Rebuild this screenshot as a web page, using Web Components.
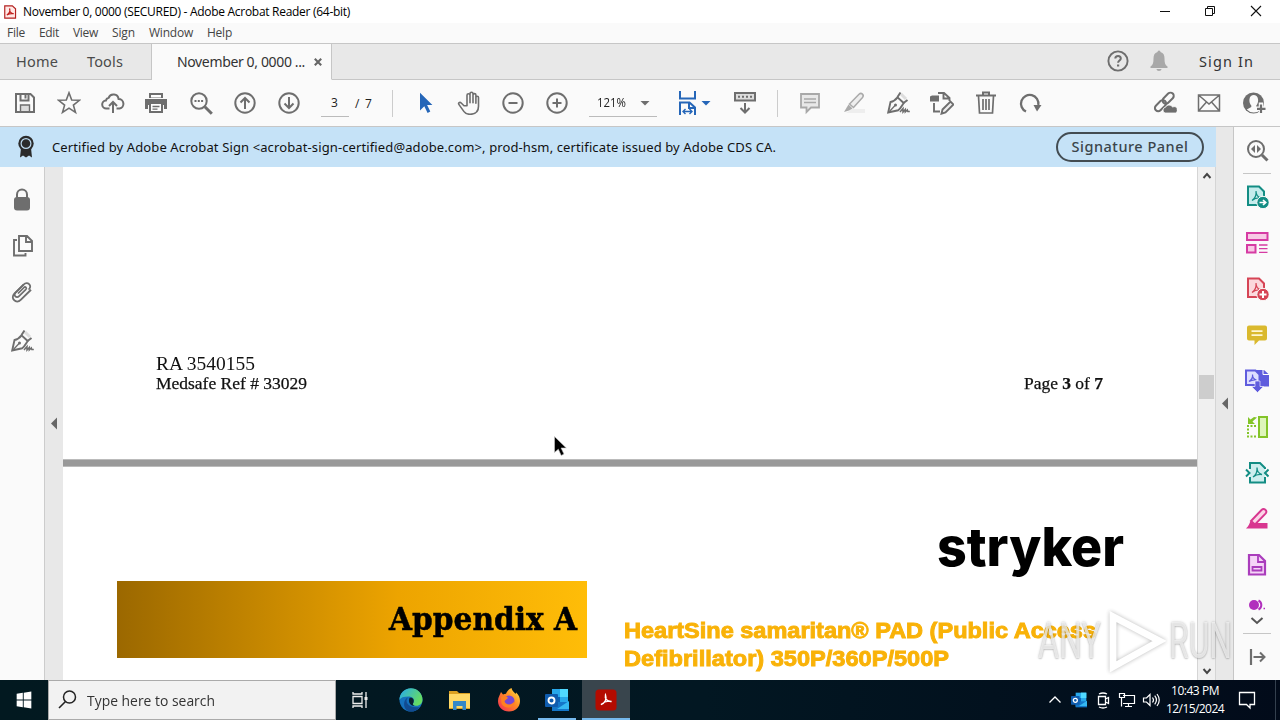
<!DOCTYPE html>
<html lang="en">
<head>
<meta charset="utf-8">
<title>November 0, 0000 (SECURED) - Adobe Acrobat Reader (64-bit)</title>
<style>
html,body{margin:0;padding:0;width:1280px;height:720px;overflow:hidden;background:#fff;font-family:"Open Sans","Noto Sans",sans-serif;color:#333}
</style>
</head>
<body>
<reader-window></reader-window>
<script>
const ICONS = {
save:'<g fill="none" stroke="#6e6e6e" stroke-width="2"><path d="M3 3h14.5L21 6.5V21H3z"/><path d="M7.5 3v6.5h8V3M12.5 4v3.5"/><path d="M7.5 20v-6h9v6" fill="#ddd" stroke-width="1.4"/></g>',
star:'<path d="M12 1.8l2.7 7.2 7.7.3-6 4.8 2.1 7.4L12 17.200l-6.500 4.300 2.100-7.400-6-4.800 7.700-.3z" fill="none" stroke="#6e6e6e" stroke-width="1.6"/>',
cloud:'<g fill="none" stroke="#6e6e6e" stroke-width="2"><path d="M8.500 17.500H5.500a4 4 0 0 1-.6-8 3.500 3.500 0 0 1 2.700-2.700 5.200 5.200 0 0 1 10 1.200 4.800 4.800 0 0 1 1 9.500H15.500"/><path d="M12 22v-10M8 15l4-4 4 4"/></g>',
print:'<path d="M4 2h14v5H4z" fill="#6e6e6e"/><path d="M0 8h22v10h-3v-4H3v4H0z" fill="#6e6e6e"/><path d="M5 13v8h12V13" fill="#fff" stroke="#6e6e6e" stroke-width="2"/><path d="M7.500 15.500h7M7.500 18.200h5" stroke="#6e6e6e" stroke-width="1.300"/><path d="M6 4h10v2.500H6z" fill="#fff"/>',
find:'<circle cx="10" cy="10" r="7.700" fill="none" stroke="#6e6e6e" stroke-width="2"/><path d="M15.800 15.800l7 7" stroke="#6e6e6e" stroke-width="3"/><path d="M5.500 10h9" stroke="#6e6e6e" stroke-width="2.200" stroke-dasharray="2 1.300"/>',
up:'<g fill="none" stroke="#6e6e6e" stroke-width="2"><circle cx="12" cy="12" r="9.700"/><path d="M12 18V7.500M7.500 11.500l4.500-4.500 4.500 4.500"/></g>',
down:'<g fill="none" stroke="#6e6e6e" stroke-width="2"><circle cx="12" cy="12" r="9.700"/><path d="M12 6v10.500M7.500 12.500l4.500 4.500 4.500-4.500"/></g>',
arrow:'<path d="M7 1.800v17.700l4.300-4.200 3.300 6.700 2.700-1.400-3.200-6.500h5.300z" fill="#2566b8"/>',
hand:'<path d="M6.500 14.500L3.700 11.700c-1.500-1.500-3.300.2-2.200 1.600l5 7c1.600 2.200 3.500 2.700 6 2.700 5.200 0 8.500-2.500 8.500-8V6.300c0-1.900-2.600-1.900-2.600 0V12 3.800c0-2-2.900-2-2.900 0V11.500 2.500c0-2-3-2-3 0v9 -7.500c0-2-3-2-3 0V14.500z" transform="translate(.5 .3)" fill="none" stroke="#6e6e6e" stroke-width="1.600" stroke-linejoin="round"/>',
minus:'<g fill="none" stroke="#6e6e6e" stroke-width="2"><circle cx="12" cy="12" r="9.700"/><path d="M7.500 12h9"/></g>',
plus:'<g fill="none" stroke="#6e6e6e" stroke-width="2"><circle cx="12" cy="12" r="9.700"/><path d="M7.500 12h9M12 7.500v9"/></g>',
fit:'<g fill="none" stroke="#2566b8" stroke-width="2"><path d="M4 0v7.500h15V0M4 24V11.500h9.500l5.500 5V24M13 11.500v5.500h6"/><path d="M7 20.500h9M9.500 18l-2.500 2.500 2.500 2.500M13.500 18l2.500 2.500-2.500 2.500" stroke-width="1.400"/></g>',
keys:'<path d="M2 2h20v7.500H2z" fill="#ddd" stroke="#6e6e6e" stroke-width="2"/><path d="M5 5.800h14" stroke="#6e6e6e" stroke-width="2" stroke-dasharray="2 2"/><path d="M12 12v9M7.500 17l4.500 4.500 4.500-4.500" fill="none" stroke="#6e6e6e" stroke-width="2"/>',
note:'<path d="M3 3h18v13.500h-8L8.500 21v-4.500H3z" fill="#e8e8e8" stroke="#a8a8a8" stroke-width="1.800"/><path d="M6 8h12M6 11.500h12" stroke="#a8a8a8" stroke-width="1.400"/>',
mark:'<path d="M10 18h13v4H4z" fill="#eee"/><path d="M7.500 13L17 3.200c2.500-2.200 5.500.8 3.500 3.300L11.500 16.500z" fill="#eee" stroke="#aaa" stroke-width="1.500"/><path d="M6.500 13.500l4 4-3.500 2-5 1.500z" fill="#aaa"/>',
pen:'<path d="M2.200 21.500l2.300-10.500c3-.6 5-2.100 7-4.700l6.200 5.700c-2 3-3 5.500-5.500 7.300z" fill="none" stroke="#6e6e6e" stroke-width="1.900"/><path d="M3 21l6-6.500" stroke="#6e6e6e" stroke-width="1.300"/><circle cx="9.500" cy="14" r="1.500" fill="#6e6e6e"/><path d="M15 3l5 5" stroke="#ddd" stroke-width="3"/><path d="M11.500 6l3-4.500M17.500 12l4-3" stroke="#6e6e6e" stroke-width="2"/><path d="M14 21l3-3.500v3.500l2.300-2.500v2.500l2-2 .5 1.500h2" fill="none" stroke="#6e6e6e" stroke-width="1.500"/>',
edit:'<g fill="none" stroke="#6e6e6e" stroke-width="1.900"><path d="M8 2h6l5.500 5v3M13.500 2v5.500h6M4 12v8.500h6"/><path d="M12.500 18.500l8-8 3 3-8 8-4 1.200z" fill="#eee"/></g><path d="M0 5.500l2-1h7v6H0z" fill="#6e6e6e"/>',
trash:'<g fill="none" stroke="#6e6e6e" stroke-width="2"><path d="M2 4.500h20M9 4V1.500h6V4"/><path d="M4.500 5l1 17h13l1-17M9 8v11M12 8v11M15 8v11" stroke-width="1.700"/></g>',
rotate:'<path d="M8 20.500A8.700 8.700 0 1 1 20.300 14" fill="none" stroke="#6e6e6e" stroke-width="2.300"/><path d="M15.500 14h8l-4.500 6.500z" fill="#6e6e6e"/>',
link:'<g fill="none" stroke="#6e6e6e" stroke-width="2"><rect x="8.500" y="4" width="13" height="6.500" rx="3.250" transform="rotate(-45 15 7)"/><rect x="1" y="11" width="13" height="6.500" rx="3.250" transform="rotate(-45 8 14.500)"/></g><path d="M12 22a3 3 0 0 1 .5-5.800 4 4 0 0 1 7-.3A3.300 3.300 0 0 1 22.500 22z" fill="#6e6e6e" stroke="#fafafa" stroke-width=".8"/>',
mail:'<path d="M1.500 4h21v16h-21zM1.500 4L12 13 22.500 4M1.500 20l8-9M22.500 20l-8-9" fill="none" stroke="#6e6e6e" stroke-width="1.500"/>',
user:'<circle cx="11.500" cy="12" r="10.500" fill="#6e6e6e"/><path d="M7.500 8c.5-5.500 8-5.500 8.500 0 .4 3-.4 5-1.700 6.500v1.500l4.500 2.500a9.500 9.500 0 0 1-14 0l4.500-2.500v-1.500C7.900 13 7.100 11 7.500 8z" fill="#fafafa"/><path d="M19 11.500v11.500M13.500 17.800h10.500" stroke="#fafafa" stroke-width="4.500"/><path d="M19 13.500v8.500M15 17.800h8.500" stroke="#6e6e6e" stroke-width="2.200"/>',
help:'<circle cx="12" cy="12" r="9.600" fill="none" stroke="#6e6e6e" stroke-width="1.900"/><path d="M9.300 9.500c0-3.500 5.500-3.500 5.500 0 0 2-2.700 2.100-2.700 4.200" fill="none" stroke="#6e6e6e" stroke-width="2"/><path d="M11 15.500h2.200v2H11z" fill="#6e6e6e"/>',
bell:'<path d="M10.500 3a1.500 1.500 0 0 1 3 0c3 .8 4 3.200 4 6.500 0 4 .5 6.500 3 8v1.500h-17v-1.500c2.500-1.500 3-4 3-8 0-3.300 1-5.700 4-6.500zM9.500 20h5c0 2.500-5 2.500-5 0z" fill="#a8a8a8"/>',
ribbon:'<path d="M7 13l-1 9.500 3-2 3 2 3-2 3 2L17 13z" fill="#2b2b2b"/><circle cx="12" cy="8.500" r="7.700" fill="#2b2b2b"/><circle cx="12" cy="8.500" r="4.900" fill="none" stroke="#bcd9ee" stroke-width="1.200"/>',
lock:'<path d="M7 11V6.500a5 5 0 0 1 10 0V11" fill="none" stroke="#6e6e6e" stroke-width="2"/><rect x="4" y="9" width="16" height="13.500" rx="3" fill="#6e6e6e"/>',
pages:'<g fill="none" stroke="#6e6e6e" stroke-width="1.900"><path d="M9 2h8l5 5v10H9zM16 2v6h6M7 6H4v15.500h11.500V19"/></g>',
clip:'<path d="M9 14.500l6-6c1.300-1.300 3.200.5 1.900 1.900l-6.800 6.800c-2.700 2.700-6.200-.9-3.500-3.600l8-8c4-4 9 1.100 5 5.100" transform="translate(-1 -1)" fill="none" stroke="#6e6e6e" stroke-width="1.700"/><path d="M13.600 4.600L4.400 13.600c-4.500 4.700 1.700 10.800 6.300 6.300L21 9.700" fill="none" stroke="#6e6e6e" stroke-width="1.900"/>',
search2:'<circle cx="11" cy="11" r="8" fill="none" stroke="#6e6e6e" stroke-width="2"/><path d="M17 17l5.500 5.500" stroke="#6e6e6e" stroke-width="3"/><path d="M10 7v8l-4-4zM12 7v8l4-4z" fill="#6e6e6e"/>',
export:'<path d="M3 1.500h11l5 5V20H3z" fill="#c5ecec" stroke="#138d84" stroke-width="2"/><path d="M7 15.500c3-2 4.500-5 4-9.500 0 4 1.500 6 5 7-4-.5-6 0-9 2.500" stroke="#138d84" stroke-width="1.200" fill="none"/><circle cx="18" cy="17.500" r="6.200" fill="#138d84" stroke="#fafafa"/><path d="M14.500 17.500h6M18 15l2.700 2.500L18 20" stroke="#fff" stroke-width="1.700" fill="none"/>',
organize:'<g fill="#f8c9e5" stroke="#d63ba3" stroke-width="2"><path d="M2 2h20.500v7H2zM2 14h8.500v7.500H2z"/><path d="M14 14h8.500M14 17.700h8.500M14 21.300h8.500" stroke-width="1.300"/></g>',
create:'<path d="M3 1.500h11l5 5V20H3z" fill="#fbd8dc" stroke="#d64455" stroke-width="2"/><path d="M7 15.500c3-2 4.500-5 4-9.500 0 4 1.500 6 5 7-4-.5-6 0-9 2.500" stroke="#d64455" stroke-width="1.200" fill="none"/><circle cx="18" cy="17.500" r="6.200" fill="#d64455" stroke="#fafafa"/><path d="M14.500 17.500h7M18 14v7" stroke="#fff" stroke-width="2"/>',
comment:'<path d="M4 2.500h16q2 0 2 2v11q0 2-2 2h-6L9.500 22v-4.500H4q-2 0-2-2v-11q0-2 2-2z" fill="#dab92e"/><path d="M6.500 8.200h11M6.500 12.200h11" stroke="#fff6d0" stroke-width="1.700"/>',
combine:'<path d="M9 1h10l5 4.500v12H9z" fill="#5f5cdd"/><path d="M1 1.500h9.500l4 4V16H1z" fill="#dedeff" stroke="#5f5cdd" stroke-width="2"/><path d="M4 12.500c3-2 4-4 3.500-7 0 3 1.500 5 4 5.500-3-.4-5 0-7.500 1.500" fill="none" stroke="#5f5cdd" stroke-width="1.200"/><path d="M18 0v5.500h6" fill="none" stroke="#fff" stroke-width="1"/><path d="M10 12h5v5.500h3.500l-6 6-6-6H10z" fill="#5f5cdd" stroke="#fff" stroke-width=".6"/>',
compare:'<path d="M14 2h8v20h-8z" fill="#def5bb" stroke="#83c429" stroke-width="2"/><path d="M11 11H3v10.500h9" fill="none" stroke="#83c429" stroke-width="2" stroke-dasharray="2 1.500"/><path d="M3 2v7h7L7.500 6.500 12 2.500 9 2 5.500 4.500z" fill="#83c429"/>',
compress:'<path d="M5 8V2h10l5 5v1M5 16v5.500h15V16" fill="#cdeeee" stroke="#138d84" stroke-width="2"/><path d="M5 8h15v8H5z" fill="#cdeeee"/><path d="M1 8.500l3.500 3.500L1 15.500M23.500 8.500L20 12l3.500 3.500" fill="none" stroke="#138d84" stroke-width="2"/><path d="M8 16c3-2 4.500-5 4-9.500 0 4 1.500 6 5 7-4-.5-6 0-9 2.500" fill="none" stroke="#138d84" stroke-width="1.300"/>',
redact:'<path d="M1 21.500l5-5.500h16.500v5.500z" fill="#d83790"/><path d="M6 14L16.500 3c2.500-2.500 6.500.7 4 3.700L10 17.500z" fill="#fbd5e7" stroke="#d83790" stroke-width="1.900"/><path d="M5.500 14l4 4-6.500 2z" fill="#d83790"/>',
fill:'<path d="M4 2h10l6 6v13.500H4z" fill="#f5d4f7" stroke="#aa3dbc" stroke-width="2.200"/><path d="M13 2v7h7M7.500 14h9v3.500h-9z" fill="none" stroke="#aa3dbc" stroke-width="1.800"/>',
more:'<circle cx="9" cy="12" r="5" fill="#b130bd"/><path d="M13.500 7.500a5 5 0 0 1 0 9" fill="none" stroke="#b130bd" stroke-width="2"/><path d="M18.500 15.500h1.500" stroke="#b130bd" stroke-width="1.500"/>',
collapse:'<path d="M6 4v16" stroke="#6e6e6e" stroke-width="2.200"/><path d="M8.500 12h11M15 7.500l4.500 4.500-4.500 4.500" fill="none" stroke="#6e6e6e" stroke-width="2"/>',
chev:'<path d="M6.500 9l5.500 5 5.500-5" fill="none" stroke="#555" stroke-width="2"/>',
sup:'<path d="M8.500 14l3.500-4 3.500 4" fill="none" stroke="#444" stroke-width="1.900"/>',
sdown:'<path d="M8.500 10l3.500 4 3.500-4" fill="none" stroke="#444" stroke-width="1.900"/>',
left:'<path d="M15 5.500v12l-6-6z" fill="#666"/>',
tri:'<path d="M7.500 10h9L12 14.500z" fill="#6e6e6e"/>',
triblue:'<path d="M7.500 10h9L12 14.500z" fill="#2566b8"/>',
pdf:'<path d="M3 1.500h13l5.500 5V22.500H3z" fill="#ffe9e6" stroke="#b42120" stroke-width="2"/><path d="M6.500 17c4-2 6-6 5-11-1.200 5 2 8.500 7 9-5-1-8 0-12 2" fill="none" stroke="#c0201e" stroke-width="2"/>',
min:'<path d="M7 11.500h10" stroke="#111"/>',
restore:'<path d="M6.500 8.500h7v7h-7zM8.500 8V6.500h7v7H14" fill="none" stroke="#111"/>',
close:'<path d="M6 6l10 10M16 6L6 16" stroke="#111" stroke-width="1.100"/>',
x:'<path d="M8.500 8.500l7 7M15.500 8.500l-7 7" stroke="#666" stroke-width="2.300"/>',
win:'<path d="M4 5.200l6.700-1V11.500H4zM11.700 4L20 2.800v8.700h-8.300zM4 12.500h6.700v7.300L4 18.800zM11.700 12.500H20v8.700l-8.300-1.200z" fill="#fff"/>',
lens:'<circle cx="14.500" cy="9" r="6" fill="none" stroke="#222" stroke-width="1.500"/><path d="M10.500 13.500L4 20" stroke="#222" stroke-width="1.600"/>',
task:'<g fill="none" stroke="#eee" stroke-width="1.300"><path d="M4 8.500h9v7H4zM4 4v2h9V4M4 20v-2h9v2M17 4v16"/><path d="M15.500 9h3v3h-3z" fill="#eee" stroke="none"/></g>',
edge:'<defs><linearGradient id="a" x1="0" y1="0" x2="1" y2=".5"><stop offset="0" stop-color="#26a9ee"/><stop offset="1" stop-color="#66dc62"/></linearGradient></defs><circle cx="12" cy="12" r="11.500" fill="#1571bd"/><path d="M.5 12a11.500 11.500 0 0 1 23-.5c0 5-4 7-8 6-2.500-.7-1.500-2-1-3 1.500-4-1.500-6-5-6-5 0-8 1-9 3.500z" fill="url(#a)"/><path d="M9 9.500c-4 4 .5 11.500 12 9.500-2.500 3-6 4.500-9 4.500C4 23.500 3 12 9 9.500z" fill="#114b91"/><path d="M10.500 10c3-.7 5 1.500 4 4.500-.5 1-1.500 2.200 1 3-3 1.500-7-3-5-7.500z" fill="#0a2030"/>',
folder:'<path d="M1 3h8l2 2h11v16H1z" fill="#dba122"/><path d="M1 6h21v14H1z" fill="#ffd966"/><path d="M5 13h13v9h-3.500v-4h-6v4H5z" fill="#3488c8"/>',
firefox:'<defs><linearGradient id="b" x1="1" y1="0" x2="0" y2="1"><stop offset="0" stop-color="#ffe847"/><stop offset=".45" stop-color="#ff8b24"/><stop offset="1" stop-color="#f2255a"/></linearGradient></defs><path d="M12 23.500C5.500 23.500 1 19 1 13 1 9 3 7 4 4l2 2.500c1-.6 2-.8 3-.8C10 3.500 12 1 14.500 0c.5 3 3 4 4 6l.6-1.500C22 7 23 10 23 13c0 6-4.500 10.500-11 10.500z" fill="url(#b)"/><circle cx="12" cy="13" r="5.500" fill="#7747d4"/><path d="M4 9c3-2 6-1 7 1l-3.500 3C8 17 15 18 17.500 13c1 7-10 9-13 2.500z" fill="#ff8020"/>',
outlook:'<path d="M7 1h16v21H7z" fill="#28a8ea"/><path d="M15 1h8v8h-8z" fill="#50d9ff"/><path d="M7 9h8v7H7z" fill="#0a62b5"/><path d="M7 14h17v9H7z" fill="#1476c8"/><path d="M24 13l-12 8h12z" fill="#35b8f1"/><rect x="0" y="6" width="13" height="13" rx="1" fill="#0f5cae"/><circle cx="6.500" cy="12.500" r="3" fill="none" stroke="#fff" stroke-width="1.900"/>',
acrobat:'<rect x="1.500" y="1.500" width="21" height="21" rx="3.500" fill="#b30b00"/><path d="M7 16.500c4-1.500 6-5.500 4.500-9.500C10.500 10.500 13.500 14 17.500 13.500c-3.500-1-7 0-10.500 3z" fill="none" stroke="#fff" stroke-width="1.400"/>',
tup:'<path d="M6.500 14.500L12 9l5.500 5.500" fill="none" stroke="#fff" stroke-width="1.300"/>',
cam:'<path d="M7.500 8.500h7v8h-7zM14.500 11l3-1.500v6l-3-1.500M8 6q4-2 8 0M8 19q4 2 8 0" fill="none" stroke="#fff" stroke-width="1.300"/>',
net:'<path d="M8 7.500h11.500v8H8M4.500 5.500h5v4h-5zM6.500 9.500v9M13.500 16v2.500M10 18.500h7" fill="none" stroke="#fff" stroke-width="1.200"/>',
sound:'<path d="M4.500 10h3l3.500-3.500v11L7.500 14h-3zM13.500 9.500q2 2.500 0 5M15.700 7.700q3.500 4.300 0 8.600M18 6q4.500 6 0 12" fill="none" stroke="#fff" stroke-width="1.200"/>',
action:'<path d="M4.500 4.500h15v12h-4.500v3.500L11.500 16.500h-7z" fill="none" stroke="#fff" stroke-width="1.300"/>',
cursor:'<path d="M5.500 1.500v16l3.800-3.300 2.900 6.300 2.800-1.400-2.900-6.100h5.200z" fill="#000" stroke="#ccc" stroke-width=".6"/>',
play:'<path d="M3.500 2.500v19.500L21.500 12z" fill="none" stroke="#fff" stroke-width="2.600"/>'
};

class UiIcon extends HTMLElement {
  connectedCallback() {
    if (this.shadowRoot) return;
    const s = this.getAttribute('size') || 24;
    this.attachShadow({mode:'open'}).innerHTML =
      `<style>:host{display:flex;flex:none;align-items:center;justify-content:center}svg{display:block;flex:none}</style>
       <svg width="${s}" height="${s}" viewBox="0 0 24 24">${ICONS[this.getAttribute('name')]}</svg>`;
  }
}
/* A single-line label that spreads (or, with "scale", stretches) its text to a given width. */
class FitText extends HTMLElement {
  connectedCallback() {
    if (this.shadowRoot) return;
    const w = +this.getAttribute('w');
    this.attachShadow({mode:'open'}).innerHTML =
      `<style>:host{display:block;flex:none;white-space:nowrap;width:${w}px}span{display:inline-block;transform-origin:0 50%}</style><span><slot></slot></span>`;
    const span = this.shadowRoot.querySelector('span');
    const n = span.getBoundingClientRect().width;
    if (!n) return;
    if (this.hasAttribute('scale')) span.style.transform = `scaleX(${w / n})`;
    else span.style.letterSpacing = (w - n) / this.textContent.length + 'px';
  }
}
function define(name, html) {
  const t = document.createElement('template');
  t.innerHTML = html;
  customElements.define(name, class extends HTMLElement {
    connectedCallback() {
      if (!this.shadowRoot) this.attachShadow({mode:'open'}).append(t.content.cloneNode(true));
    }
  });
}
customElements.define('ui-icon', UiIcon);
customElements.define('fit-text', FitText);

define('title-bar', `<style>:host{display:flex;height:23px;background:#fff;align-items:center;font-size:12px;line-height:22px;color:#000}
ui-icon.a{margin:0 6px 0 3px}.s{flex:1}.w{width:46px;height:21px}</style>
<ui-icon class="a" name="pdf" size="14"></ui-icon><fit-text w="327">November 0, 0000 (SECURED) - Adobe Acrobat Reader (64-bit)</fit-text><span class="s"></span>
<ui-icon class="w" name="min"></ui-icon><ui-icon class="w" name="restore"></ui-icon><ui-icon class="w" name="close"></ui-icon>`);

define('menu-bar', `<style>:host{display:flex;height:20px;background:#fafafa;align-items:center;padding-left:7px;gap:14px;font-size:12px;line-height:20px;color:#444}</style>
<fit-text w="18">File</fit-text><fit-text w="20">Edit</fit-text><fit-text w="25">View</fit-text><fit-text w="23">Sign</fit-text><fit-text w="44">Window</fit-text><fit-text w="25">Help</fit-text>`);

define('tab-bar', `<style>:host{display:flex;box-sizing:border-box;height:37px;background:#e8e8e8;border-top:1px solid #c6c6c6;font:14.500px/34px "Noto Sans",sans-serif;color:#4b4b4b}
.l,.t,.r{display:flex;box-sizing:border-box;border-bottom:1px solid #c6c6c6;align-items:center}
.l,.r{padding-bottom:1px}
.l{width:152px;padding-left:16px;gap:29px;border-right:1px solid #c6c6c6}
.t{width:180px;background:#fafafa;border-color:#fafafa;border-right:1px solid #c6c6c6;padding-left:25px;color:#333;font-size:14px}
.t ui-icon{margin-left:2px}.r{flex:1;justify-content:flex-end;padding-right:26px}
.r ui-icon{width:41px}.r fit-text{margin-left:20px;color:#333}</style>
<div class="l"><fit-text w="42">Home</fit-text><fit-text w="36">Tools</fit-text></div>
<div class="t"><fit-text w="128">November 0, 0000 ...</fit-text><ui-icon name="x" size="22"></ui-icon></div>
<div class="r"><ui-icon name="help"></ui-icon><ui-icon name="bell"></ui-icon><fit-text w="55">Sign In</fit-text></div>`);

define('tool-bar', `<style>:host{display:flex;box-sizing:border-box;height:47px;background:#fafafa;border-bottom:1px solid #c6c6c6;padding-left:3px;align-items:center;font-size:12px;color:#222}
ui-icon.b{width:44px}.f{display:flex;box-sizing:border-box;height:28px;border-bottom:1px solid #bbb;align-items:center}
.p{width:28px;margin-left:10px;padding-left:10px}.of{margin-left:6px}.d{width:1px;height:27px;background:#ccc}
.d1{margin:0 10px 0 19px}.z{width:68px;margin-left:10px;padding-left:8px}.z ui-icon{margin-left:7px}
.fit{margin-left:19px}.dd{margin-left:-6px}.k{margin-left:15px}.d2{margin:0 10px 0 20px}.s{flex:1}.e{display:flex;padding-right:4px}.e ui-icon{width:44.500px}</style>
<ui-icon class="b" name="save"></ui-icon><ui-icon class="b" name="star"></ui-icon><ui-icon class="b" name="cloud"></ui-icon><ui-icon class="b" name="print"></ui-icon><ui-icon class="b" name="find"></ui-icon><ui-icon class="b" name="up"></ui-icon><ui-icon class="b" name="down"></ui-icon>
<div class="f p"><fit-text w="7">3</fit-text></div><fit-text class="of" w="18">/ 7</fit-text><span class="d d1"></span>
<ui-icon class="b" name="arrow"></ui-icon><ui-icon class="b" name="hand"></ui-icon><ui-icon class="b" name="minus"></ui-icon><ui-icon class="b" name="plus"></ui-icon>
<div class="f z"><fit-text w="29" scale>121%</fit-text><ui-icon name="tri"></ui-icon></div>
<ui-icon class="fit" name="fit"></ui-icon><ui-icon class="dd" name="triblue"></ui-icon><ui-icon class="k" name="keys"></ui-icon><span class="d d2"></span>
<ui-icon class="b" name="note"></ui-icon><ui-icon class="b" name="mark"></ui-icon><ui-icon class="b" name="pen"></ui-icon><ui-icon class="b" name="edit"></ui-icon><ui-icon class="b" name="trash"></ui-icon><ui-icon class="b" name="rotate"></ui-icon><span class="s"></span>
<div class="e"><ui-icon name="link"></ui-icon><ui-icon name="mail"></ui-icon><ui-icon name="user"></ui-icon></div>`);

define('certificate-bar', `<style>:host{display:flex;height:40px;background:#c5e2f7;align-items:center;font:13px/40px "Noto Sans",sans-serif;color:#111}
ui-icon{margin:0 14px 0 14px}.b{box-sizing:border-box;margin-left:280px;width:148px;height:30px;border:2px solid #434c52;border-radius:15px;display:flex;align-items:center;justify-content:center;font-size:14.500px;font-weight:500;line-height:24px;padding-bottom:2px;color:#3b454b}</style>
<ui-icon name="ribbon"></ui-icon><fit-text w="724">Certified by Adobe Acrobat Sign &lt;acrobat-sign-certified@adobe.com&gt;, prod-hsm, certificate issued by Adobe CDS CA.</fit-text><div class="b"><fit-text w="117">Signature Panel</fit-text></div>`);

define('left-rail', `<style>:host{display:flex;flex-direction:column;box-sizing:border-box;width:45px;background:#fafafa;border-right:1px solid #ccc;padding-top:21px}
ui-icon{height:24px;width:44px;margin-bottom:22px}</style>
<ui-icon name="lock"></ui-icon><ui-icon name="pages"></ui-icon><ui-icon name="clip" style="margin-bottom:25px"></ui-icon><ui-icon name="pen"></ui-icon>`);

define('side-gutter', `<style>:host{display:flex;flex:none;box-sizing:border-box;width:18px;background:#e8e8e8;align-items:center;justify-content:center}</style><ui-icon name="left"></ui-icon>`);

define('scroll-bar', `<style>:host{display:flex;flex-direction:column;box-sizing:border-box;width:19px;background:#f0f0f0;border:solid #d5d5d5;border-width:0 1px;align-items:center}
ui-icon{height:18px}.g{flex:1}.t{width:15px;height:24px;background:#cdcdcd}.a{height:190px}</style>
<ui-icon name="sup"></ui-icon><div class="a"></div><div class="t"></div><div class="g"></div><ui-icon name="sdown"></ui-icon>`);

define('document-view', `<style>:host{display:flex;flex-direction:column;width:1134px;background:#fff;overflow:hidden;color:#111;font:17px/19px "Liberation Serif",serif}
.one{height:292px;display:flex;justify-content:space-between;align-items:flex-end;padding:0 94px 0 93px;box-sizing:border-box}
.a,.b{padding-bottom:66px;-webkit-text-stroke:.25px #111}.a .r{font-size:18px;line-height:19px;-webkit-text-stroke:0}.sep{height:8px;flex:none;background:#999;box-sizing:border-box;border:solid #bbb;border-width:1px 0}
.logo{display:flex;justify-content:flex-end;padding:49px 73px 0 0;height:65px;font:800 54px/62px Inter,sans-serif;color:#000}
.row{display:flex;margin:0 0 0 54px}
.box{display:flex;box-sizing:border-box;width:470px;height:77px;background:linear-gradient(90deg,#9b6800,#eda400 60%,#ffbd08);align-items:center;justify-content:flex-end;padding-right:10px;color:#000;font:bold 31px/77px "DejaVu Serif",serif;-webkit-text-stroke:.5px #000}
.h{margin:36px 0 0 37px;font:bold 21.500px/28px "Liberation Sans",sans-serif;color:#f9b208;-webkit-text-stroke:.9px #f9b208}</style>
<div class="one"><div class="a"><fit-text class="r" w="99" scale>RA 3540155</fit-text><fit-text w="151" scale>Medsafe Ref # 33029</fit-text></div><div class="b"><fit-text w="79" scale>Page <b>3</b> of <b>7</b></fit-text></div></div>
<div class="sep"></div>
<div class="logo"><fit-text w="187" scale>stryker</fit-text></div>
<div class="row"><div class="box"><fit-text w="188" scale>Appendix A</fit-text></div><div class="h"><fit-text w="472" scale>HeartSine samaritan® PAD (Public Access</fit-text><fit-text w="325" scale>Defibrillator) 350P/360P/500P</fit-text></div></div>`);

define('right-rail', `<style>:host{display:flex;flex-direction:column;box-sizing:border-box;width:47px;background:#fafafa;border-left:1px solid #c6c6c6;align-items:center}
ui-icon{height:46px}.s{width:28px;height:1px;flex:none;background:#c6c6c6}.m{height:20px;margin-top:7px}.c{height:12px;margin-bottom:6px}</style>
<ui-icon name="search2"></ui-icon><span class="s"></span><ui-icon name="export"></ui-icon><ui-icon name="organize"></ui-icon><ui-icon name="create"></ui-icon><ui-icon name="comment"></ui-icon><ui-icon name="combine"></ui-icon><ui-icon name="compare"></ui-icon><ui-icon name="compress"></ui-icon><ui-icon name="redact"></ui-icon><ui-icon name="fill"></ui-icon><ui-icon class="m" name="more"></ui-icon><ui-icon class="c" name="chev"></ui-icon><span class="s"></span><ui-icon name="collapse"></ui-icon>`);

define('water-mark', `<style>:host{display:flex;position:absolute;left:1038px;top:610px;width:196px;height:62px;align-items:center;font:400 50px/62px Roboto,sans-serif;color:rgba(247,247,247,.75);text-shadow:0 0 3px rgba(0,0,0,.25),0 1px 2px rgba(0,0,0,.15);z-index:3}
ui-icon{width:68px;height:60px;filter:drop-shadow(0 0 2px rgba(0,0,0,.35));opacity:.8}</style>
<fit-text w="63" scale>ANY</fit-text><ui-icon name="play" size="62"></ui-icon><fit-text w="63" scale>RUN</fit-text>`);

define('task-bar', `<style>:host{display:flex;height:40px;background:linear-gradient(90deg,#021920,#021722 55%,#020b1a);color:#fff;align-items:stretch;font-size:12px}
.w{width:48px}.q{display:flex;box-sizing:border-box;width:288px;background:#f2f2f2;border:1px solid #aaa;align-items:center;color:#333;font-size:15px;line-height:38px}
.q ui-icon{margin:0 8px 0 6px}.i{width:49px}.o,.p{box-sizing:border-box;border-bottom:2px solid #76b9ed;padding-top:2px}.o{width:38px;margin:0 6px 0 5px}.p{width:48px;background:#39454d}.g{flex:1}
.y{width:24px}.c{width:64px;display:flex;flex-direction:column;align-items:center;padding-top:2px}.c fit-text{line-height:18px}.n{width:40px}.e{width:1px;margin:0 4px 0 8px;background:#34404e}</style>
<ui-icon class="w" name="win" size="22"></ui-icon><div class="q"><ui-icon name="lens"></ui-icon><fit-text w="128" scale>Type here to search</fit-text></div>
<ui-icon class="i" name="task"></ui-icon><ui-icon class="i" style="margin-left:1px" name="edge"></ui-icon><ui-icon class="i" name="folder"></ui-icon><ui-icon class="i" name="firefox"></ui-icon><ui-icon class="o" name="outlook"></ui-icon><ui-icon class="p" name="acrobat"></ui-icon><span class="g"></span>
<ui-icon class="y" name="tup"></ui-icon><ui-icon class="y" name="outlook" size="16"></ui-icon><ui-icon class="y" name="cam"></ui-icon><ui-icon class="y" name="net"></ui-icon><ui-icon class="y" name="sound"></ui-icon>
<div class="c"><fit-text w="48">10:43 PM</fit-text><fit-text w="58">12/15/2024</fit-text></div><ui-icon class="n" name="action"></ui-icon><span class="e"></span>`);

define('reader-window', `<style>:host{display:flex;flex-direction:column;position:relative;width:1280px;height:720px;overflow:hidden}
.m{display:flex;height:553px}.d{display:flex;flex-direction:column;width:1216px}.v{display:flex;flex:1;min-height:0}
.cur{position:absolute;left:549px;top:435px}</style>
<title-bar></title-bar><menu-bar></menu-bar><tab-bar></tab-bar><tool-bar></tool-bar>
<div class="m"><div class="d"><certificate-bar></certificate-bar><div class="v"><left-rail></left-rail><side-gutter></side-gutter><document-view></document-view><scroll-bar></scroll-bar></div></div><side-gutter style="width:17px"></side-gutter><right-rail></right-rail></div>
<task-bar></task-bar><water-mark></water-mark><ui-icon class="cur" name="cursor"></ui-icon>`);
</script>
</body>
</html>
